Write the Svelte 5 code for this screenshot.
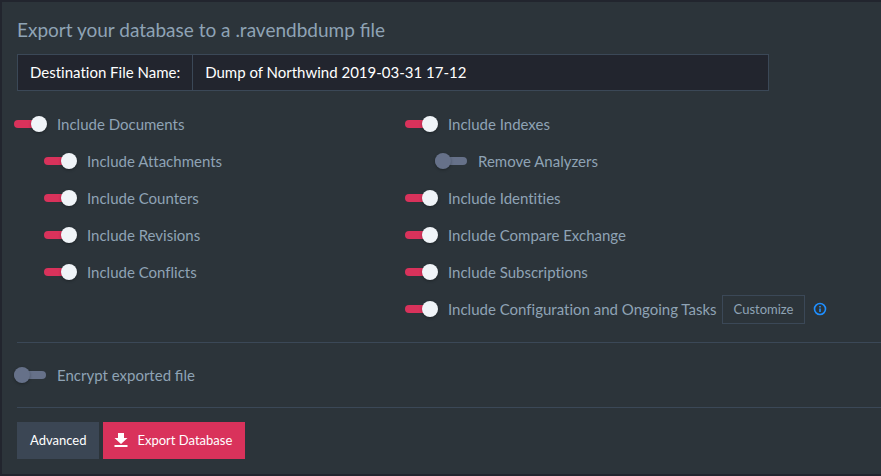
<script lang="ts">
  type Option = { id: string; label: string; on: boolean; nested?: boolean; customize?: boolean };

  let fileName = $state('Dump of Northwind 2019-03-31 17-12');
  let encrypt = $state(false);

  let columns: Option[][] = $state([
    [
      { id: 'documents', label: 'Include Documents', on: true },
      { id: 'attachments', label: 'Include Attachments', on: true, nested: true },
      { id: 'counters', label: 'Include Counters', on: true, nested: true },
      { id: 'revisions', label: 'Include Revisions', on: true, nested: true },
      { id: 'conflicts', label: 'Include Conflicts', on: true, nested: true },
    ],
    [
      { id: 'indexes', label: 'Include Indexes', on: true },
      { id: 'analyzers', label: 'Remove Analyzers', on: false, nested: true },
      { id: 'identities', label: 'Include Identities', on: true },
      { id: 'compare-exchange', label: 'Include Compare Exchange', on: true },
      { id: 'subscriptions', label: 'Include Subscriptions', on: true },
      { id: 'configuration', label: 'Include Configuration and Ongoing Tasks', on: true, customize: true },
    ],
  ]);
</script>

<main class="panel">
  <h1>Export your database to a .ravendbdump file</h1>

  <div class="input-group">
    <label for="file-name">Destination File Name:</label>
    <input id="file-name" type="text" bind:value={fileName} />
  </div>

  <div class="options">
    {#each columns as column}
      <div class="column">
        {#each column as option (option.id)}
          <div class="row" class:nested={option.nested}>
            <input class="toggle" type="checkbox" id={option.id} bind:checked={option.on} />
            <label for={option.id}>{option.label}</label>
            {#if option.customize}
              <button class="customize" type="button">Customize</button>
              <svg class="info" viewBox="0 0 14 14" aria-hidden="true">
                <circle cx="7" cy="7" r="5.5" fill="none" stroke="currentColor" stroke-width="1.6" />
                <path d="M6.2 4h1.6v1.5H6.2zM6.2 6.4h1.6V10H6.2z" fill="currentColor" />
              </svg>
            {/if}
          </div>
        {/each}
      </div>
    {/each}
  </div>

  <hr />

  <div class="row encrypt">
    <input class="toggle" type="checkbox" id="encrypt" bind:checked={encrypt} />
    <label for="encrypt">Encrypt exported file</label>
  </div>

  <hr />

  <div class="actions">
    <button class="btn" type="button">Advanced</button>
    <button class="btn primary" type="button">
      <svg viewBox="0 0 14 14" aria-hidden="true">
        <path d="M4 0h6v5h3.5L7 11 .5 5H4zM.5 12h13v2H.5z" fill="currentColor" />
      </svg>
      Export Database
    </button>
  </div>
</main>

<style>
  :global(body) { background: #2c343a; }

  .panel {
    padding: 15px 0 15px 15px;
    border: 2px solid #22252e;
    border-right: 0;
    background: #2c343a;
    color: #8fa3b5;
    font: 15px/20px Lato, sans-serif;
    font-variant-ligatures: none;
  }
  h1 {
    margin: 0 0 11px;
    font-size: 19px;
    font-weight: 400;
    line-height: 26px;
    font-variant-ligatures: normal;
  }

  input, button { font: inherit; margin: 0; border-radius: 0; }
  button { cursor: pointer; }

  .input-group {
    display: flex;
    max-width: 750px;
    margin-right: 15px;
    border: 1px solid #3b4857;
    background: #22252e;
    color: #fff;
  }
  .input-group label { padding: 7px 12px 8px; border-right: 1px solid #3b4857; }
  .input-group input {
    flex: 1;
    min-width: 0;
    padding: 7px 12px 8px;
    border: 0;
    background: none;
    color: inherit;
  }

  .options {
    display: grid;
    grid-template-columns: minmax(0, 391px) 1fr;
    margin: 15px 0 14px -3px;
  }
  .row { display: flex; align-items: center; height: 36px; margin-bottom: 1px; white-space: nowrap; }
  .nested { padding-left: 30px; }
  .encrypt { margin: 14px 0 14px -3px; font-variant-ligatures: normal; }

  .toggle {
    appearance: none;
    display: flex;
    align-items: center;
    flex: none;
    width: 32px;
    height: 8px;
    margin-right: 11px;
    border-radius: 4px;
    background: #667189;
    cursor: pointer;
  }
  .toggle::before {
    content: '';
    flex: none;
    width: 16px;
    height: 16px;
    border-radius: 50%;
    background: #667189;
    box-shadow: 0 1px 3px rgba(0, 0, 0, 0.3);
  }
  .toggle:checked { background: #d9325b; }
  .toggle:checked::before { margin-left: 17px; background: #f0f4f8; }

  .customize {
    height: 29px;
    margin-left: 5px;
    padding: 0 11px;
    border: 1px solid #3b4857;
    background: none;
    color: inherit;
    font-size: 13px;
  }
  .info { width: 14px; height: 14px; margin-left: 8px; color: #1f8fff; }

  hr { margin: 0; border: 0; border-top: 1px solid #3b4857; }

  .actions { display: flex; gap: 4px; margin-top: 14px; }
  .btn {
    display: flex;
    align-items: center;
    height: 37px;
    padding: 0 13px 2px;
    border: 0;
    background: #3b4654;
    color: #fff;
    font-size: 13px;
  }
  .primary { padding-left: 11px; background: #d9325b; }
  .primary svg { width: 14px; height: 14px; margin-right: 9px; }
</style>
